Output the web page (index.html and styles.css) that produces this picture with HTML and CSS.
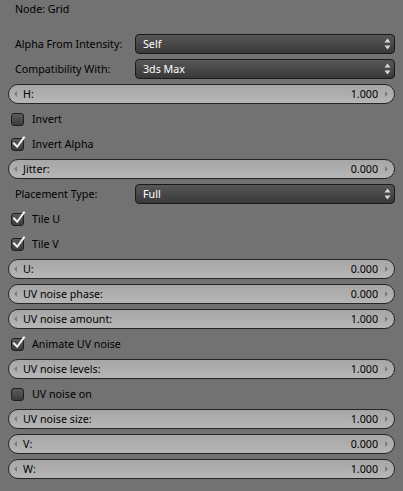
FILE: index.html
```html
<!DOCTYPE html>
<html>
<head>
<meta charset="utf-8">
<link rel="stylesheet" href="styles.css">
</head>
<body>
<div class="panel">
  <div class="title">Node: Grid</div>
  <div class="rows">
    <div class="prop"><span class="plabel">Alpha From Intensity:</span><div class="menu"><span>Self</span><svg class="updown" width="7" height="12" viewBox="0 0 7 12"><path d="M3.5 0.5 L6.5 4.5 L0.5 4.5 Z M3.5 11.5 L6.5 7.5 L0.5 7.5 Z"/></svg></div></div>
    <div class="prop"><span class="plabel">Compatibility With:</span><div class="menu"><span>3ds Max</span><svg class="updown" width="7" height="12" viewBox="0 0 7 12"><path d="M3.5 0.5 L6.5 4.5 L0.5 4.5 Z M3.5 11.5 L6.5 7.5 L0.5 7.5 Z"/></svg></div></div>
    <div class="num"><span class="arr left"></span><span class="nlabel">H:</span><span class="val">1.000</span><span class="arr right"></span></div>
    <div class="check"><span class="box"></span><span class="clabel">Invert</span></div>
    <div class="check"><span class="box on"><svg class="tick" width="14" height="14" viewBox="0 0 14 14"><path d="M2 7.5 L5.2 10.8 L12 1.5"/></svg></span><span class="clabel">Invert Alpha</span></div>
    <div class="num"><span class="arr left"></span><span class="nlabel">Jitter:</span><span class="val">0.000</span><span class="arr right"></span></div>
    <div class="prop"><span class="plabel">Placement Type:</span><div class="menu"><span>Full</span><svg class="updown" width="7" height="12" viewBox="0 0 7 12"><path d="M3.5 0.5 L6.5 4.5 L0.5 4.5 Z M3.5 11.5 L6.5 7.5 L0.5 7.5 Z"/></svg></div></div>
    <div class="check"><span class="box on"><svg class="tick" width="14" height="14" viewBox="0 0 14 14"><path d="M2 7.5 L5.2 10.8 L12 1.5"/></svg></span><span class="clabel">Tile U</span></div>
    <div class="check"><span class="box on"><svg class="tick" width="14" height="14" viewBox="0 0 14 14"><path d="M2 7.5 L5.2 10.8 L12 1.5"/></svg></span><span class="clabel">Tile V</span></div>
    <div class="num"><span class="arr left"></span><span class="nlabel">U:</span><span class="val">0.000</span><span class="arr right"></span></div>
    <div class="num"><span class="arr left"></span><span class="nlabel">UV noise phase:</span><span class="val">0.000</span><span class="arr right"></span></div>
    <div class="num"><span class="arr left"></span><span class="nlabel">UV noise amount:</span><span class="val">1.000</span><span class="arr right"></span></div>
    <div class="check"><span class="box on"><svg class="tick" width="14" height="14" viewBox="0 0 14 14"><path d="M2 7.5 L5.2 10.8 L12 1.5"/></svg></span><span class="clabel">Animate UV noise</span></div>
    <div class="num"><span class="arr left"></span><span class="nlabel">UV noise levels:</span><span class="val">1.000</span><span class="arr right"></span></div>
    <div class="check"><span class="box"></span><span class="clabel">UV noise on</span></div>
    <div class="num"><span class="arr left"></span><span class="nlabel">UV noise size:</span><span class="val">1.000</span><span class="arr right"></span></div>
    <div class="num"><span class="arr left"></span><span class="nlabel">V:</span><span class="val">0.000</span><span class="arr right"></span></div>
    <div class="num"><span class="arr left"></span><span class="nlabel">W:</span><span class="val">1.000</span><span class="arr right"></span></div>
  </div>
</div>
</body>
</html>
```
FILE: styles.css
```css
html, body {
  margin: 0;
  padding: 0;
  background: #727272;
}
body {
  width: 403px;
  height: 491px;
  overflow: hidden;
  font-family: "Noto Sans", "Open Sans", sans-serif;
  font-size: 10.7px;
  color: #000;
}
.panel {
  padding: 0 8px;
  width: 387px;
}
.title {
  height: 20px;
  line-height: 19px;
  padding-left: 7px;
}
.rows {
  margin-top: 14px;
  display: flex;
  flex-direction: column;
  gap: 5px;
}
.prop {
  display: grid;
  grid-template-columns: 127px 1fr;
  height: 20px;
  align-items: center;
}
.plabel {
  padding-left: 7px;
  white-space: nowrap;
}
.menu {
  height: 20px;
  box-sizing: border-box;
  border: 1px solid #1a1a1a;
  border-radius: 4px;
  background: linear-gradient(#575757, #393939);
  color: #fff;
  display: flex;
  align-items: center;
  justify-content: space-between;
  padding: 0 3px 0 7px;
}
.updown {
  fill: #d8d8d8;
}
.num {
  height: 20px;
  box-sizing: border-box;
  border: 1px solid #262626;
  border-radius: 10px;
  background: linear-gradient(#a6a6a6, #b6b6b6);
  display: flex;
  align-items: center;
  padding: 0 6px 0 5px;
}
.arr {
  width: 0;
  height: 0;
  border-top: 3px solid transparent;
  border-bottom: 3px solid transparent;
}
.arr.left {
  border-right: 3px solid #7c7c7c;
}
.arr.right {
  border-left: 3px solid #7c7c7c;
  margin-left: 7px;
}
.nlabel {
  margin-left: 6px;
  flex: 1;
}
.check {
  height: 20px;
  display: flex;
  align-items: center;
}
.box {
  position: relative;
  width: 13px;
  height: 13px;
  box-sizing: border-box;
  margin-left: 3px;
  border: 1px solid #1e1e1e;
  border-radius: 3px;
  background: linear-gradient(#5a5a5a, #3c3c3c);
}
.tick {
  position: absolute;
  left: 0;
  top: -3px;
  fill: none;
  stroke: #f0f0f0;
  stroke-width: 2;
  stroke-linecap: square;
}
.clabel {
  margin-left: 8px;
}
```
